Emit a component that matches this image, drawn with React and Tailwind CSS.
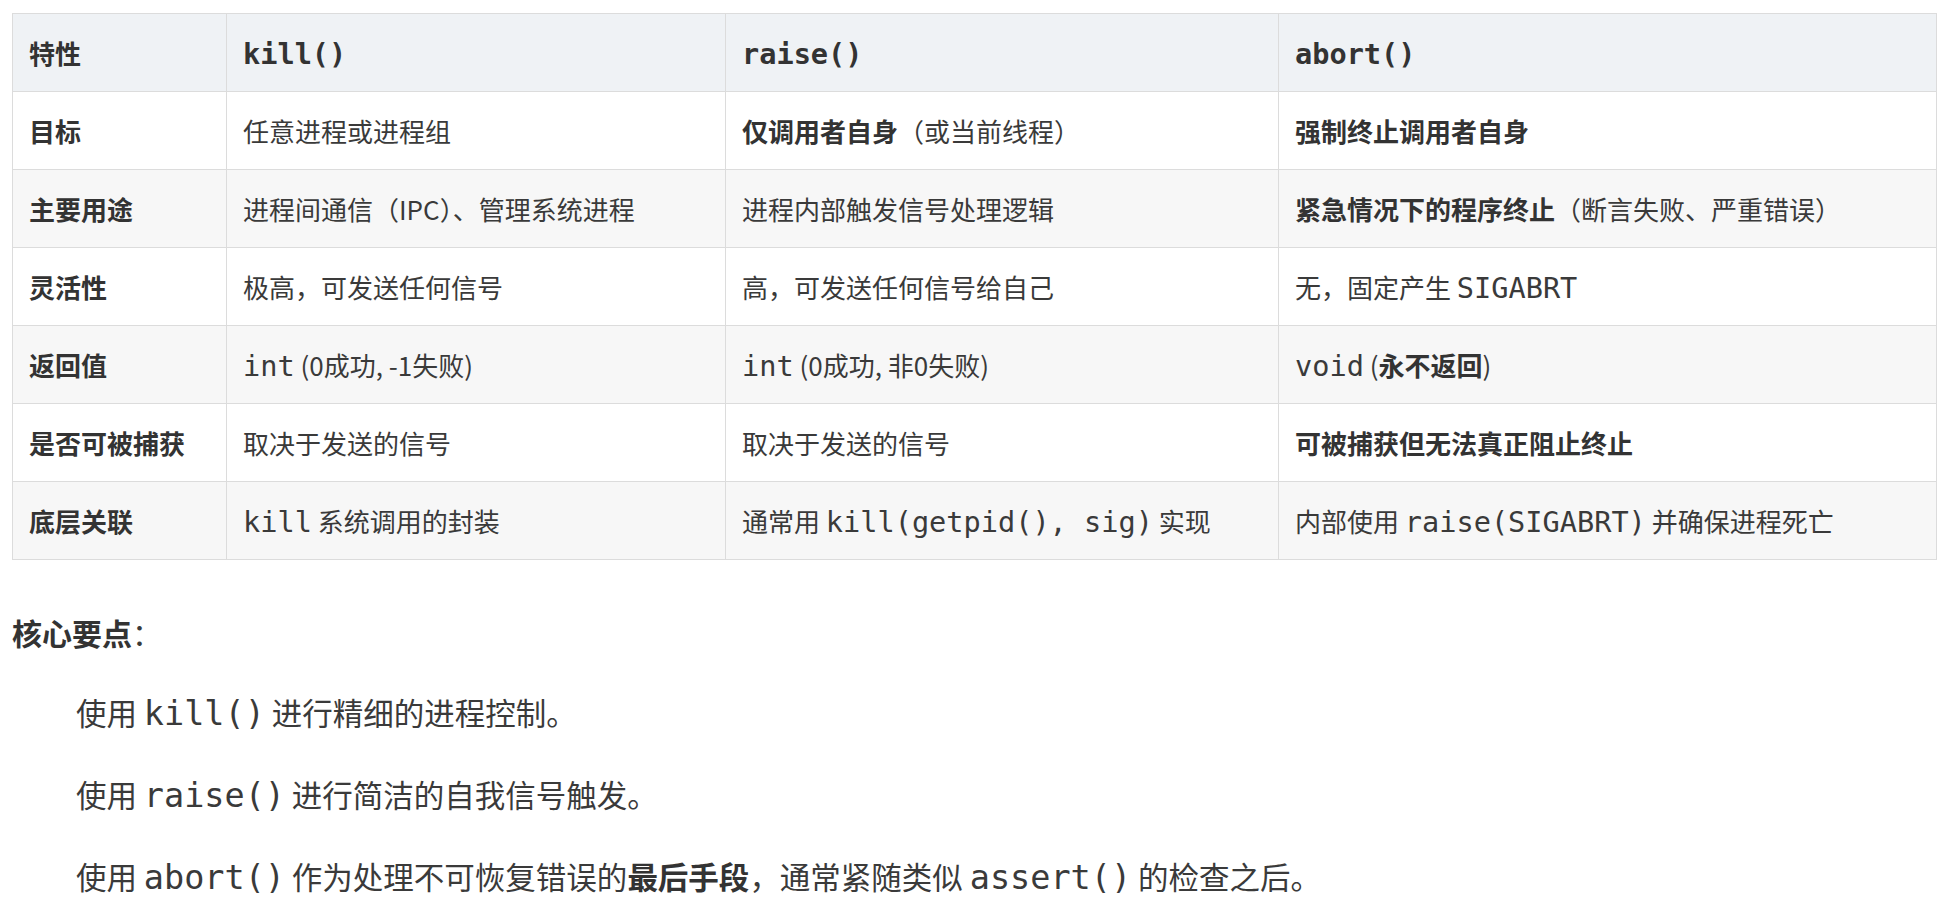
import React from 'react';

const Code = ({ children, bold, size = 'text-[28.6px]' }) => (
  <code className={`font-['DejaVu_Sans_Mono',monospace] ${size} leading-none ${bold ? 'font-bold' : 'font-normal'}`}>
    {children}
  </code>
);

const B = ({ children }) => <strong className="font-bold text-[#333]">{children}</strong>;

const rows = [
  {
    name: '目标',
    kill: '任意进程或进程组',
    raise: <><B>仅调用者自身</B>（或当前线程）</>,
    abort: <B>强制终止调用者自身</B>,
  },
  {
    name: '主要用途',
    kill: '进程间通信（IPC）、管理系统进程',
    raise: '进程内部触发信号处理逻辑',
    abort: <><B>紧急情况下的程序终止</B>（断言失败、严重错误）</>,
  },
  {
    name: '灵活性',
    kill: '极高，可发送任何信号',
    raise: '高，可发送任何信号给自己',
    abort: <>无，固定产生 <Code>SIGABRT</Code></>,
  },
  {
    name: '返回值',
    kill: <><Code>int</Code> (0成功, -1失败)</>,
    raise: <><Code>int</Code> (0成功, 非0失败)</>,
    abort: <><Code>void</Code> (<B>永不返回</B>)</>,
  },
  {
    name: '是否可被捕获',
    kill: '取决于发送的信号',
    raise: '取决于发送的信号',
    abort: <B>可被捕获但无法真正阻止终止</B>,
  },
  {
    name: '底层关联',
    kill: <><Code>kill</Code> 系统调用的封装</>,
    raise: <>通常用 <Code>kill(getpid(), sig)</Code> 实现</>,
    abort: <>内部使用 <Code>raise(SIGABRT)</Code> 并确保进程死亡</>,
  },
];

const cell = 'border border-[#dcdcdc] pl-[16px] pr-[19px] py-[19px] text-left align-middle';
const big = 'text-[33.5px]';

export default function App() {
  return (
    <div className="min-h-screen bg-white pl-3 pt-[13px] font-['Noto_Sans_CJK_SC','Noto_Sans',sans-serif] text-[#3a3a3a]">
      <table className="w-[1924px] border-collapse table-fixed text-[26px] leading-[39px]">
        <colgroup>
          <col className="w-[214px]" />
          <col className="w-[499px]" />
          <col className="w-[553px]" />
          <col className="w-[658px]" />
        </colgroup>
        <thead>
          <tr className="bg-[#eff2f5] text-[#333]">
            <th className={`${cell} font-bold`}>特性</th>
            <th className={`${cell}`}><Code bold>kill()</Code></th>
            <th className={`${cell}`}><Code bold>raise()</Code></th>
            <th className={`${cell}`}><Code bold>abort()</Code></th>
          </tr>
        </thead>
        <tbody>
          {rows.map((r, i) => (
            <tr key={r.name} className={i % 2 === 0 ? 'bg-white' : 'bg-[#f7f7f7]'}>
              <td className={`${cell} font-bold text-[#333]`}>{r.name}</td>
              <td className={cell}>{r.kill}</td>
              <td className={cell}>{r.raise}</td>
              <td className={cell}>{r.abort}</td>
            </tr>
          ))}
        </tbody>
      </table>

      <div className="text-[30px] leading-[45px]">
        <p className="mt-[50px]">
          <B>核心要点</B>：
        </p>

        <ul className="mt-[35px] flex flex-col gap-[37px] pl-[64px] list-none text-[30.5px]">
          <li>使用 <Code size={big}>kill()</Code> 进行精细的进程控制。</li>
          <li>使用 <Code size={big}>raise()</Code> 进行简洁的自我信号触发。</li>
          <li>
            使用 <Code size={big}>abort()</Code> 作为处理不可恢复错误的<B>最后手段</B>，通常紧随类似 <Code size={big}>assert()</Code> 的检查之后。
          </li>
        </ul>
      </div>
    </div>
  );
}
